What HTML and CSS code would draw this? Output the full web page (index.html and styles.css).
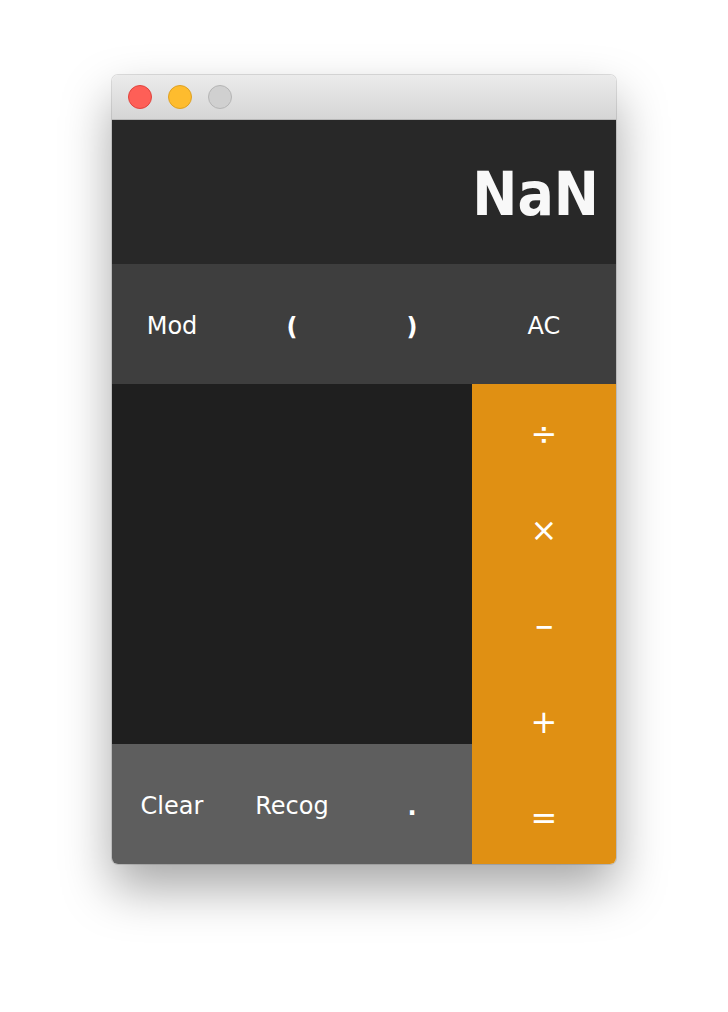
FILE: index.html
```html
<!DOCTYPE html>
<html>
<head>
<meta charset="utf-8">
<link rel="stylesheet" href="styles.css">
</head>
<body>
<div class="window">
  <div class="titlebar">
    <span class="light red"></span>
    <span class="light yellow"></span>
    <span class="light gray"></span>
  </div>
  <div class="display">NaN</div>
  <div class="toprow">
    <div class="btn">Mod</div>
    <div class="btn paren">(</div>
    <div class="btn paren">)</div>
    <div class="btn wide">AC</div>
  </div>
  <div class="main">
    <div class="left">
      <div class="pad"></div>
      <div class="bottomrow">
        <div class="btn">Clear</div>
        <div class="btn">Recog</div>
        <div class="btn dot">.</div>
      </div>
    </div>
    <div class="ops">
      <div class="op">÷</div>
      <div class="op">×</div>
      <div class="op minus">−</div>
      <div class="op">+</div>
      <div class="op">=</div>
    </div>
  </div>
</div>
</body>
</html>
```
FILE: styles.css
```css
html, body {
  margin: 0;
  padding: 0;
  background: #ffffff;
}
body {
  font-family: "DejaVu Sans", "Liberation Sans", sans-serif;
  padding: 75px 0 0 112px;
  min-height: 1012px;
  box-sizing: border-box;
}
.window {
  width: 504px;
  border-radius: 6px;
  overflow: hidden;
  box-shadow: 0 24px 50px rgba(0,0,0,0.35), 0 0 0 1px rgba(0,0,0,0.12);
}
.titlebar {
  height: 44px;
  background: linear-gradient(#ebebeb, #d5d5d5);
  border-bottom: 1px solid #b8b8b8;
  display: flex;
  align-items: center;
  padding-left: 16px;
  gap: 16px;
}
.light {
  width: 24px;
  height: 24px;
  border-radius: 50%;
  box-sizing: border-box;
}
.red { background: #fe5f57; border: 1px solid #e0443e; }
.yellow { background: #febc2e; border: 1px solid #dea123; }
.gray { background: #d0d0d0; border: 1px solid #b5b5b5; }
.display {
  height: 144px;
  background: #282828;
  color: #f8f8f8;
  font-family: "DejaVu Sans Condensed", "DejaVu Sans", sans-serif;
  font-weight: bold;
  font-size: 60px;
  display: flex;
  align-items: center;
  justify-content: flex-end;
  padding-right: 17px;
  padding-top: 4px;
  box-sizing: border-box;
}
.toprow {
  height: 120px;
  background: #3e3e3e;
  display: flex;
}
.btn {
  width: 120px;
  display: flex;
  align-items: center;
  justify-content: center;
  color: #ffffff;
  font-size: 24px;
  padding-top: 3px;
  box-sizing: border-box;
}
.btn.paren { font-weight: 600; padding-top: 5px; }
.btn.wide { width: 144px; }
.main {
  display: flex;
  height: 480px;
}
.left {
  width: 360px;
  display: flex;
  flex-direction: column;
}
.pad {
  flex: 1;
  background: #1f1f1f;
}
.bottomrow {
  height: 120px;
  background: #5e5e5e;
  display: flex;
}
.dot { font-size: 24px; font-weight: bold; padding-top: 6px; }
.ops {
  width: 144px;
  background: #e09013;
  display: flex;
  flex-direction: column;
}
.op {
  height: 96px;
  display: flex;
  align-items: center;
  justify-content: center;
  color: #ffffff;
  font-size: 32px;
  padding-top: 4px;
  box-sizing: border-box;
}
.op.minus { font-size: 24px; font-weight: bold; padding-top: 6px; }
```
